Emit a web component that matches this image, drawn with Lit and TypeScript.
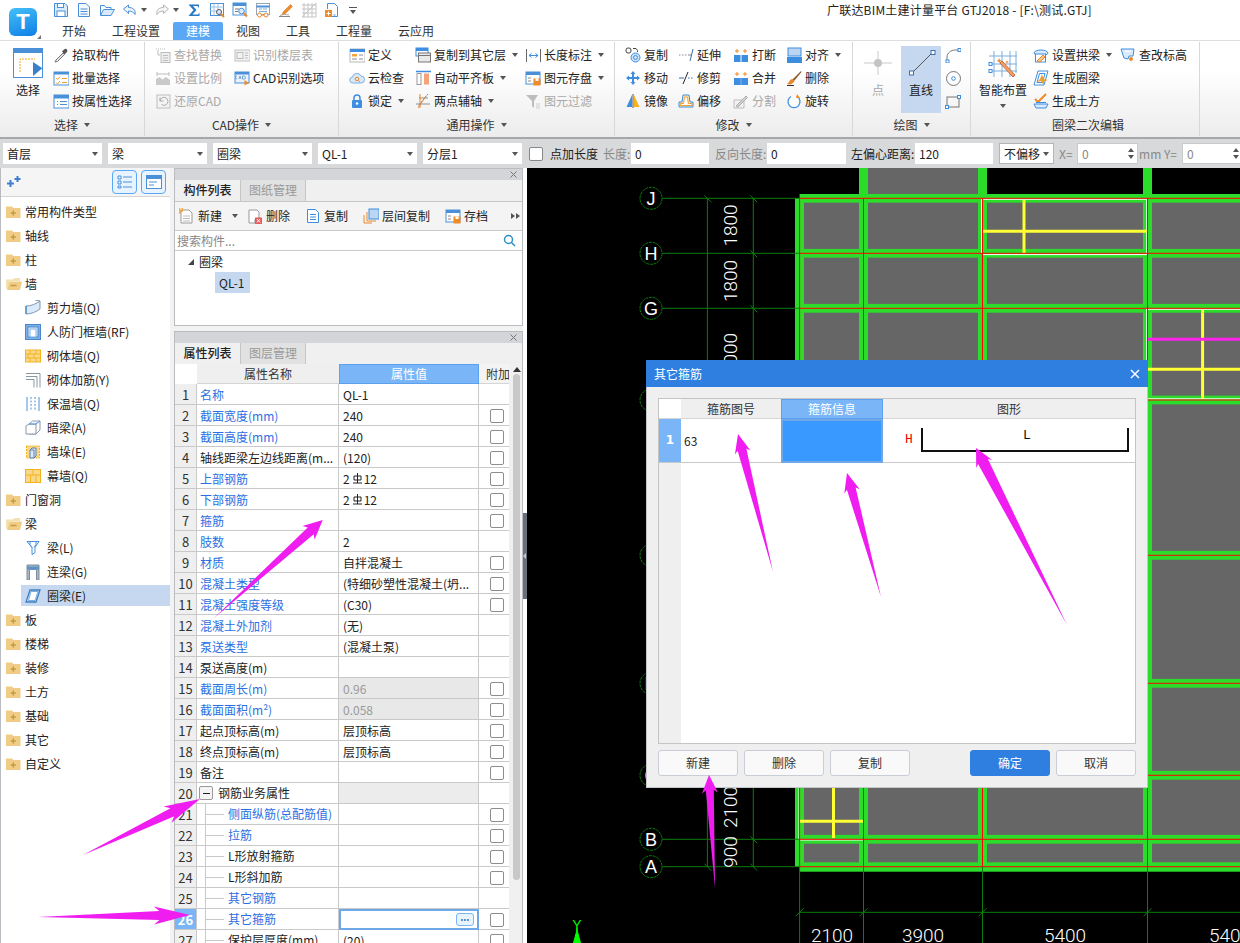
import { LitElement, html, svg, css, nothing } from 'lit';
import { customElement } from 'lit/decorators.js';

// icon set, all drawn on a 16x16 box
const ICONS: Record<string, unknown> = {
  save: svg`<path d="M1.5 1.5h10.5l2.500 2.500v10.500h-13z" fill="#dbeafa" stroke="#4a90d9"/><rect x="4.500" y="1.500" width="6" height="4" fill="#fff" stroke="#4a90d9"/><rect x="4" y="9" width="8" height="5.500" fill="#fff" stroke="#4a90d9"/>`,
  doc: svg`<path d="M2.500 1.500h7.500l3.500 3.500v9.500h-11z" fill="#f4f9fe" stroke="#4a90d9"/><path d="M4.500 7h7M4.500 9.500h7M4.500 12h7" stroke="#4a90d9"/>`,
  open: svg`<path d="M1.500 13.500v-10h4l1.500 2h5v2" fill="none" stroke="#4a90d9"/><path d="M1.500 13.500l3-6h11l-3.500 6z" fill="#dbeafa" stroke="#4a90d9"/>`,
  undo: svg`<path d="M6.500 3 1.500 7l5 4.500V9c3 0 5 1 6.500 3.500C14 8 11 5.500 6.500 5.500z" fill="#eef5fc" stroke="#4a90d9"/>`,
  redo: svg`<path d="M9.500 3l5 4-5 4.500V9c-3 0-5 1-6.500 3.500C2 8 5 5.500 9.500 5.500z" fill="#f6f6f6" stroke="#b5b5b5"/>`,
  sigma: svg`<path d="M2.500 2.500h10.500v3.500l-1.500-2H7l3.500 4-4 4.500h5.500l1.500-2v3.500H2.500l5-6z" fill="#2a79c4"/>`,
  qgrid: svg`<rect x="1.500" y="1.500" width="13" height="12" fill="#fff" stroke="#4a90d9"/><path d="M5 1.500v12M9 1.500v9M1.500 5h13M1.500 9h10" stroke="#9cc3ea"/><circle cx="10" cy="10" r="2.500" fill="#dbeafa" stroke="#555"/><path d="M12 12l3 3" stroke="#e8872c" stroke-width="2"/>`,
  qfind: svg`<rect x="1" y="1" width="13" height="12" fill="#fff" stroke="#4a90d9"/><rect x="1" y="1" width="13" height="3" fill="#4a90d9"/><path d="M3 7h4M3 9.500h3" stroke="#777"/><circle cx="9.500" cy="9" r="2.800" fill="#dbeafa" stroke="#4a90d9"/><path d="M11.500 11l3.500 3.500" stroke="#e8872c" stroke-width="2"/>`,
  qglass: svg`<rect x="1.500" y="1.500" width="13" height="11" fill="#fff" stroke="#9aa7b3"/><path d="M1.500 4.500h13" stroke="#4a90d9" stroke-width="2"/><path d="M4 7h3M8 7h4M4 9.500h8" stroke="#7aaedc"/><circle cx="4.500" cy="13" r="2" fill="#fff" stroke="#e8872c"/><circle cx="11" cy="13" r="2" fill="#fff" stroke="#e8872c"/><path d="M6.500 13h2.500" stroke="#e8872c"/>`,
  qpen: svg`<path d="M5 10 12.500 2.500l2 2L7 12l-3 1z" fill="#ef8a2d" stroke="#d8741c" stroke-width=".5"/><path d="M1 14.500h11" stroke="#888"/><path d="M2 13.500c3-1.500 6-1 9-.5" fill="none" stroke="#aaa"/>`,
  qmesh: svg`<g fill="none" stroke="#c4c4c4"><path d="M1 3h14M1 7h14M1 11h14M1 15h14M3 1v14M7 1v14M11 1v14M15 1v14"/><path d="M1 15 15 1"/></g>`,
  qnew: svg`<path d="M3.500 7V1.500h7l3 3v10H8" fill="#fff" stroke="#4a90d9"/><path d="M5.500 3.500h-.1M9.500 13h2" stroke="#4a90d9"/><rect x="1" y="8" width="7" height="7" fill="#f08a24"/><path d="M4.500 9.500v4M2.500 11.500h4" stroke="#fff"/>`,
  // ribbon, first groups
  dropper: svg`<path d="M3 13 10 6l1.500 1.500L4.500 14.500 2 15z" fill="#e4e4e4" stroke="#777"/><path d="M9 4.500 11 2.500c1-1 2.500-1 3 0s.5 2 -.500 3l-2 2z" fill="#555"/>`,
  batch: svg`<rect x="1" y="2" width="15" height="13" fill="#fff" stroke="#4a90d9"/><rect x="1" y="2" width="15" height="2.500" fill="#4a90d9"/><path d="M3 8l1.500 1.500L7 6.500M3 12.500l1.500 1.500L7 11" fill="none" stroke="#f39c2b"/><path d="M9 8.500h5M9 12.500h5" stroke="#f39c2b"/>`,
  attr: svg`<rect x="1" y="2" width="15" height="13" fill="#fff" stroke="#4a90d9"/><rect x="1" y="2" width="15" height="3.500" fill="#4a90d9"/><path d="M4 8.500h1M4 11.500h1M7 8.500h7M7 11.500h7" stroke="#4a90d9"/>`,
  findrep: svg`<g stroke="#bdbdbd" fill="none"><path d="M1 2h1M3 2h1M5 2h1M7 2h1M9 2h1" /><rect x="6" y="5.500" width="9" height="10" fill="#eee"/><path d="M8 8.500h5M8 11h5M8 13.500h5M3 3v5h2"/></g>`,
  scale: svg`<g stroke="#bdbdbd" fill="none"><path d="M2 2h.1M2 2v4M14 2v4M2 4h12"/></g><path d="M1 15V9l3.500-2 3 2.500L11 7l4 3v5z" fill="#c9c9c9"/>`,
  restore: svg`<rect x="2" y="2" width="13" height="13" fill="#f4f4f4" stroke="#bdbdbd"/><path d="M5 8a4 4 0 1 1 1.500 3.500M5 4.500V8h3.500" fill="none" stroke="#a9a9a9"/>`,
  floor: svg`<rect x="1" y="3" width="15" height="11" fill="#f2f2f2" stroke="#c2c2c2"/><rect x="3" y="5.500" width="6" height="6" fill="none" stroke="#bdbdbd"/><path d="M11 6h3M11 8.500h3M11 11h3" stroke="#bdbdbd"/>`,
  cadopt: svg`<rect x="1" y="2" width="14" height="11" fill="#eaf3fc" stroke="#4a90d9"/><rect x="1" y="2" width="14" height="2.500" fill="#4a90d9"/><path d="M3 9a1.500 1.500 0 0 1 0-3M5 9l1-3 1 3M8.500 6v3h1.500a1.500 1.500 0 0 0 0-3z" fill="none" stroke="#5a93c9" stroke-width=".8"/><path d="M10.500 10v5.500l4.500-2.500z" fill="#f08a24"/>`,
  define: svg`<rect x="1" y="2" width="15" height="13" fill="#fff" stroke="#b7b7b7"/><rect x="1" y="2" width="15" height="3" fill="#3d8ee0"/><rect x="3" y="7" width="5" height="2.500" fill="#f2a33a"/><path d="M10 8h4M3 12h5M10 12h4" stroke="#8b8b8b"/>`,
  cloud: svg`<path d="M4 13a3 3 0 0 1-.5-6 4.500 4.500 0 0 1 8.500-1 3.500 3.500 0 0 1 0 7z" fill="#d9e8f7" stroke="#7cb0e2"/><circle cx="8" cy="9" r="1.800" fill="none" stroke="#e8872c"/><path d="M9.500 10.500l1.500 1.500" stroke="#e8872c"/>`,
  lock: svg`<path d="M5 7V5a3 3 0 0 1 6 0v2" fill="none" stroke="#3d8ee0" stroke-width="1.500"/><rect x="3" y="7" width="10" height="8" rx="1" fill="#3d8ee0"/><circle cx="8" cy="10.500" r="1.300" fill="#fff"/>`,
  copyfloor: svg`<rect x="1" y="1" width="12" height="8" fill="#fff" stroke="#3d8ee0"/><rect x="1" y="1" width="12" height="3" fill="#3d8ee0"/><rect x="3.500" y="6" width="12" height="9" fill="#e9e9e9" stroke="#777"/><path d="M3.500 8.500h12" stroke="#777"/>`,
  align: svg`<path d="M1 1.500h15" stroke="#3d8ee0" stroke-width="1.500"/><rect x="2" y="3.500" width="4" height="11" fill="#fff" stroke="#999"/><rect x="9" y="3.500" width="5" height="11" fill="#f5a278"/>`,
  axis: svg`<path d="M1 11h14M4 5h9" stroke="#8f8f8f"/><path d="M5 1v14M11 3 3 15" stroke="#e8872c"/><path d="M13 1 3 13" stroke="#8f8f8f" stroke-dasharray="2 1"/>`,
  measure: svg`<path d="M1.500 2v13M15.500 2v13" stroke="#666"/><path d="M4 8.500h9M4 8.500l2.500-2M4 8.500l2.500 2M13 8.500l-2.500-2M13 8.500l-2.500 2" fill="none" stroke="#3d8ee0"/>`,
  store: svg`<rect x="1" y="2" width="14" height="12" fill="#fff" stroke="#4a90d9"/><rect x="1" y="2" width="14" height="3" fill="#4a90d9"/><path d="M3 8h3M3 11h3" stroke="#888"/><rect x="8.500" y="8.500" width="7" height="7" fill="#f08a24"/><rect x="10.500" y="8.500" width="3" height="2.500" fill="#fff"/>`,
  filter: svg`<path d="M1 2h12L9 8v7l-2-2V8z" fill="#bdbdbd"/><path d="M11 11h4M11 13h4M11 15h4" stroke="#cfcfcf"/>`,
  // modify group
  copy: svg`<rect x="1" y="1" width="5" height="5" rx="2" fill="none" stroke="#444"/><circle cx="10.500" cy="10.500" r="4.500" fill="#cfe3f7" stroke="#3d8ee0"/><circle cx="10.500" cy="10.500" r="2" fill="none" stroke="#3d8ee0"/><path d="M8 1.500h3l1.500 2M12.500 3.500v1.500" fill="none" stroke="#444"/>`,
  move: svg`<path d="M8 1l2.500 3h-1.500v3h3v-1.500L15 8l-3 2.500V9h-3v3h1.500L8 15l-2.500-3H7V9H4v1.500L1 8l3-2.500V7h3V4H5.500z" fill="#3d8ee0"/>`,
  mirror: svg`<path d="M7 2v12H1.500z" fill="#3d8ee0"/><path d="M8 1v14" stroke="#555"/><path d="M9 2v12h5.500z" fill="#f5b21d"/>`,
  extend: svg`<path d="M1 8h1.500M4 8h1.500M7 8h1.500" stroke="#7b8da0"/><path d="M10 8h4" stroke="#7b8da0"/><path d="M15 2l-3 12" stroke="#3f6ea8"/>`,
  trim: svg`<path d="M1 8h5M10 8h1.500M13 8h1.500" stroke="#3f6ea8"/><path d="M10 2 5 14" stroke="#223"/>`,
  offset: svg`<path d="M5 2h6l1 7h3v5H1V9h3z" fill="#ffe9c2" stroke="#3d8ee0"/><path d="M6.500 4h3l.8 6.500H14v2H2.500v-2h3z" fill="#fff" stroke="#f0a030"/>`,
  breakit: svg`<rect x="1" y="8" width="6.500" height="7" fill="#3d8ee0"/><rect x="8.500" y="8" width="6.500" height="7" fill="#3d8ee0"/><path d="M4 6V2M2 4h4M12 6V2M10 4h4" stroke="#f08a24"/>`,
  merge: svg`<rect x="1" y="8" width="14" height="7" fill="#3d8ee0"/><path d="M8 8v7" stroke="#7db5ea"/><path d="M4 6V2M2 4h4M12 6V2M10 4h4" stroke="#f08a24"/>`,
  split: svg`<path d="M1 15V7h10v8z" fill="#f2f2f2" stroke="#bdbdbd"/><path d="M3 13 13 3l1.500 1.500L5 14z" fill="#d0d0d0" stroke="#b0b0b0"/>`,
  alignto: svg`<rect x="2" y="1" width="13" height="8" fill="#bcd6f2" stroke="#3d8ee0"/><rect x="1" y="10" width="15" height="6" fill="#3d8ee0"/>`,
  del: svg`<path d="M15 1 6.500 9.500l1.500 1.500L15.500 2z" fill="#8b5a2b"/><path d="M7 9c-2 0-3.500 1-4 3L1 14c3 1 6 0 7.500-3z" fill="#e8872c"/><path d="M1 15.500h7" stroke="#333"/>`,
  rotate: svg`<path d="M5 3.500a6 6 0 1 0 6 0" fill="#fff" stroke="#3d8ee0" stroke-width="1.300"/><path d="M11 1l-1 4 4 0z" fill="#f08a24"/>`,
  arch: svg`<path d="M1 6c1-4 13-4 14 0l-1 1.500H2z" fill="#dbeafa" stroke="#3d8ee0"/><rect x="2.500" y="7" width="10" height="8" fill="#fff" stroke="#3d8ee0"/><path d="M4 14 10 8l2 2-5 5z" fill="#f7c68a" stroke="#e8872c"/>`,
  ring: svg`<path d="M5 1h10l-4 14H1z" fill="#fff" stroke="#3d8ee0"/><path d="M6.500 3.500h5.500l-2.500 9H4z" fill="#fff" stroke="#3d8ee0"/><path d="M9 4l1.500 5L15 10l-3.500 1-1 4L8 11l-4 1 3-3z" fill="#f0a030"/>`,
  earth: svg`<path d="M2 6l3 3 8-8" fill="none" stroke="#f08a24" stroke-width="2"/><path d="M1 11h14l-2 4H3z" fill="#dbeafa" stroke="#3d8ee0"/><path d="M3 9.500h10" stroke="#3d8ee0"/>`,
  elev: svg`<path d="M1 2h13l-1 7H9l-1 3-4-1z" fill="#dbeafa" stroke="#3d8ee0"/><path d="M5 4h6" stroke="#fff"/><circle cx="11" cy="12" r="2" fill="#f08a24"/>`,
  arc: svg`<path d="M2 14.500V10c0-4 4-7 8-7h3" fill="none" stroke="#777"/><rect x="1" y="13" width="3" height="3" fill="#fff" stroke="#3d8ee0"/><rect x="13" y="1.500" width="3" height="3" fill="#fff" stroke="#3d8ee0"/>`,
  circle: svg`<circle cx="8.500" cy="8.500" r="7" fill="none" stroke="#777"/><circle cx="8.500" cy="8.500" r="1.800" fill="#fff" stroke="#3d8ee0"/>`,
  rect: svg`<rect x="2" y="4" width="12" height="10" fill="none" stroke="#777"/><rect x=".5" y="12.500" width="3" height="3" fill="#fff" stroke="#3d8ee0"/><rect x="12.500" y="2.500" width="3" height="3" fill="#fff" stroke="#3d8ee0"/>`,
  // sidebar
  folder: svg`<path d="M0 4V2.500h6L7.500 4H14.500v10H0z" fill="#f0cd87"/><path d="M7.300 6.500v5M4.800 9h5" stroke="#c99a3d" stroke-width="1.500"/>`,
  folderOpen: svg`<path d="M0 3.500h7L8.500 2H14v3H4L1.500 13 0 12z" fill="#f4e0b0"/><path d="M3.500 5.500H16L14 14H1z" fill="#f0cd87"/><path d="M4.500 9.500h6" stroke="#c99a3d" stroke-width="1.500"/>`,
  shear: svg`<path d="M1 6c5 0 10-2 14-5v8c-4 3-9 5-14 5z" fill="#dbeafa" stroke="#7e97b4"/><path d="M1 6v8" stroke="#5a93c9" stroke-width="1.500"/><path d="M15 1 10 0" stroke="#7e97b4"/>`,
  frame: svg`<rect x=".5" y=".5" width="15" height="15" fill="#7ab0e8" stroke="#4a86c8"/><rect x="3" y="3" width="10" height="10" fill="#eaf3fc" stroke="#4a86c8"/><rect x="5" y="5" width="6" height="8" fill="#fff" stroke="#7ab0e8"/>`,
  brick: svg`<rect x=".5" y="2" width="15" height="12" fill="#f8d98c" stroke="#f5b21d"/><path d="M.5 6h15M.5 10h15M5 2v4M11 2v4M3 6v4M9 6v4M5 10v4M11 10v4" stroke="#f5b21d"/>`,
  rebar: svg`<path d="M1 1.500h14v14M1 4.500h11v11M1 7.500h8v8" fill="none" stroke="#8a97a3"/>`,
  insul: svg`<path d="M2 1v14M14 1v14" stroke="#4a90d9"/><path d="M6 1v14M10 1v14" stroke="#4a90d9" stroke-dasharray="2 1.500"/>`,
  hidden: svg`<path d="M4 4 7.500 1H15v9l-4 4H4z" fill="#fff" stroke="#8a97a3"/><path d="M1 6l3-2h7v10H1z" fill="#fff" stroke="#8a97a3"/><path d="M4 4h7l4-3" fill="#dbeafa" stroke="#4a90d9"/>`,
  pier: svg`<rect x="1.500" y="2" width="13" height="12" fill="#f8d98c" stroke="#f5b21d" stroke-dasharray="2 1"/><path d="M5 6l2-2h4v8l-2 2H5z" fill="#dbeafa" stroke="#5a7fa8"/><path d="M9 6v8M5 6h4" stroke="#5a7fa8"/>`,
  curtain: svg`<rect x=".5" y="1.500" width="15" height="13" fill="#f8d98c" stroke="#f5b21d"/><path d="M.5 7h15M8 1.500V7M5.500 7v7.500M11 7v7.500" stroke="#f5b21d"/>`,
  beam: svg`<path d="M2 1.500h12l-4 6v5l-3 2v-7z" fill="#fff" stroke="#4a90d9"/><path d="M5 1.500v3l2 3M11 1.500v3l-2 3M2 1.500h12" fill="none" stroke="#4a90d9"/>`,
  link: svg`<path d="M2 1h12v15h-2.500V5.500h-7V16H2z" fill="#a9b6c4" stroke="#7e8d9c"/><rect x="2" y="2.500" width="12" height="3" fill="#5a93c9"/>`,
  ringbeam: svg`<path d="M5 2h10l-4 12H1z" fill="#cfe3f7" stroke="#3d7fc4" stroke-width="1.300"/><path d="M6 3.500h7L10 12.500H3.500z" fill="#fff" stroke="#3d7fc4" stroke-width=".6"/>`,
  // list panel toolbar
  tnew: svg`<path d="M3 2h8l3 3v10H3z" fill="#fff" stroke="#999"/><path d="M5 8h7M5 10.500h7M5 13h7" stroke="#bbb"/><path d="M1 1h1.500M3.500 1H5M1 3h4M1 5h1.500" stroke="#f39c2b" stroke-width="1.500"/>`,
  tdel: svg`<path d="M2 2h8l2 2v7H8v4H2z" fill="#fff" stroke="#999"/><rect x="8" y="9.500" width="7" height="6.500" fill="#e25c5c"/><path d="M9.800 11l3.400 3.500M13.200 11l-3.400 3.500" stroke="#fff"/>`,
  tcopy: svg`<path d="M2.500 1.500h8l3 3v10h-11z" fill="#fff" stroke="#3d8ee0"/><path d="M5 6.500h6M5 9h6M5 11.500h6" stroke="#3d8ee0"/>`,
  tlayer: svg`<rect x="6" y="1" width="10" height="10" fill="#bcd6f2" stroke="#3d8ee0"/><path d="M4 4v9h9M1 7v8h8" fill="none" stroke="#e8872c"/>`,
  tsave: svg`<rect x="1" y="2" width="14" height="12" fill="#fff" stroke="#4a90d9"/><rect x="1" y="2" width="14" height="3" fill="#4a90d9"/><path d="M3 8h3M3 11h3" stroke="#888"/><rect x="8.500" y="8.500" width="7" height="7" fill="#f08a24"/><rect x="10.500" y="8.500" width="3" height="2.500" fill="#fff"/>`,
};

const ico = (name: string, size = 16) =>
  html`<svg class="ic" width=${size} height=${size} viewBox="0 0 16 16">${ICONS[name]}</svg>`;

interface RibItem { icon: string; text?: string; off?: boolean; caret?: boolean }
interface RibCol { w: number; ml?: number; bw?: number; items?: RibItem[]; big?: string; bigText?: string; off?: boolean; active?: boolean; caret?: boolean }
interface RibGroup { w: number; pad: number; label: string; labelShift?: number; caret: boolean; cols: RibCol[] }

const bigSelect = svg`<rect x=".5" y=".5" width="29" height="29" fill="#fff" stroke="#4a90d9"/><rect x="1" y="1" width="28" height="4" fill="#4a90d9"/><path d="M7 24V11h15" fill="none" stroke="#f5a623" stroke-dasharray="2 1"/><path d="M20 14v14l9-7.500V20z" fill="#3a7fc9"/>`;
const bigLine = svg`<path d="M6 25 26 5" stroke="#555"/><rect x="3.500" y="23" width="4" height="4" fill="#fff" stroke="#3d6fb0"/><rect x="25" y="2.500" width="4" height="4" fill="#fff" stroke="#3d6fb0"/>`;
const bigPoint = svg`<path d="M15 3v24M1 15h28" stroke="#c9c9c9"/><circle cx="15" cy="15" r="4" fill="#c4c4c4"/>`;
const bigSmart = svg`<g stroke="#7aaedc"><path d="M6 3v26M14 3v26M22 3v26M28 3v22M1 8h28M1 16h28M1 23h28"/></g><rect x="1" y="14.500" width="3" height="3" fill="#fff" stroke="#3d8ee0"/><rect x="1" y="21.500" width="3" height="3" fill="#fff" stroke="#3d8ee0"/><path d="M14 13 27 27l-2 2L12 15z" fill="#f0a070" stroke="#c96b2c"/><path d="M11 10l1 2 2 .500-2 1-.500 2-1-2-2-.500 2-1zM19 12l.500 1.500 1.500.500-1.500.500-.500 1.500-.500-1.500-1.500-.500 1.500-.500z" fill="#e8872c"/>`;

const BIG: Record<string, unknown> = { select: bigSelect, line: bigLine, point: bigPoint, smart: bigSmart };

const GROUPS: RibGroup[] = [
  { w: 145, pad: 13, label: '选择', caret: true, cols: [
    { w: 40, bw: 30, big: 'select', bigText: '选择' },
    { w: 90, items: [{ icon: 'dropper', text: '拾取构件' }, { icon: 'batch', text: '批量选择' }, { icon: 'attr', text: '按属性选择' }] },
  ] },
  { w: 194, pad: 10, label: 'CAD操作', caret: true, cols: [
    { w: 79, items: [{ icon: 'findrep', text: '查找替换', off: true }, { icon: 'scale', text: '设置比例', off: true }, { icon: 'restore', text: '还原CAD', off: true }] },
    { w: 100, items: [{ icon: 'floor', text: '识别楼层表', off: true }, { icon: 'cadopt', text: 'CAD识别选项' }] },
  ] },
  { w: 276, pad: 10, label: '通用操作', caret: true, cols: [
    { w: 66, items: [{ icon: 'define', text: '定义' }, { icon: 'cloud', text: '云检查' }, { icon: 'lock', text: '锁定', caret: true }] },
    { w: 110, items: [{ icon: 'copyfloor', text: '复制到其它层', caret: true }, { icon: 'align', text: '自动平齐板', caret: true }, { icon: 'axis', text: '两点辅轴', caret: true }] },
    { w: 88, items: [{ icon: 'measure', text: '长度标注', caret: true }, { icon: 'store', text: '图元存盘', caret: true }, { icon: 'filter', text: '图元过滤', off: true }] },
  ] },
  { w: 238, pad: 10, label: '修改', caret: true, cols: [
    { w: 53, items: [{ icon: 'copy', text: '复制' }, { icon: 'move', text: '移动' }, { icon: 'mirror', text: '镜像' }] },
    { w: 55, items: [{ icon: 'extend', text: '延伸' }, { icon: 'trim', text: '修剪' }, { icon: 'offset', text: '偏移' }] },
    { w: 53, items: [{ icon: 'breakit', text: '打断' }, { icon: 'merge', text: '合并' }, { icon: 'split', text: '分割', off: true }] },
    { w: 62, items: [{ icon: 'alignto', text: '对齐', caret: true }, { icon: 'del', text: '删除' }, { icon: 'rotate', text: '旋转' }] },
  ] },
  { w: 118, pad: 10, label: '绘图', caret: true, cols: [
    { w: 38, bw: 30, big: 'point', bigText: '点', off: true },
    { w: 40, big: 'line', bigText: '直线', active: true },
    { w: 22, ml: 4, items: [{ icon: 'arc' }, { icon: 'circle' }, { icon: 'rect' }] },
  ] },
  { w: 229, pad: 8, label: '圈梁二次编辑', labelShift: 6, caret: false, cols: [
    { w: 54, bw: 48, big: 'smart', bigText: '智能布置', caret: true },
    { w: 87, items: [{ icon: 'arch', text: '设置拱梁', caret: true }, { icon: 'ring', text: '生成圈梁' }, { icon: 'earth', text: '生成土方' }] },
    { w: 72, items: [{ icon: 'elev', text: '查改标高' }] },
  ] },
];

const QAT: [string, boolean][] = [
  ['save', false], ['doc', false], ['open', false], ['undo', true], ['redo', true], ['sigma', false],
  ['qgrid', false], ['qfind', false], ['qglass', false], ['qpen', false], ['qmesh', false], ['qnew', false],
];

const TREE: [string, string, number?][] = [
  ['folder', '常用构件类型'], ['folder', '轴线'], ['folder', '柱'], ['folderOpen', '墙'],
  ['shear', '剪力墙(Q)', 1], ['frame', '人防门框墙(RF)', 1], ['brick', '砌体墙(Q)', 1], ['rebar', '砌体加筋(Y)', 1],
  ['insul', '保温墙(Q)', 1], ['hidden', '暗梁(A)', 1], ['pier', '墙垛(E)', 1], ['curtain', '幕墙(Q)', 1],
  ['folder', '门窗洞'], ['folderOpen', '梁'], ['beam', '梁(L)', 1], ['link', '连梁(G)', 1], ['ringbeam', '圈梁(E)', 2],
  ['folder', '板'], ['folder', '楼梯'], ['folder', '装修'], ['folder', '土方'], ['folder', '基础'], ['folder', '其它'], ['folder', '自定义'],
];

// name, is blue, value, has checkbox
const PROPS: [string, boolean, string, boolean][] = [
  ['名称', true, 'QL-1', false],
  ['截面宽度(mm)', true, '240', true],
  ['截面高度(mm)', true, '240', true],
  ['轴线距梁左边线距离(m...', false, '(120)', true],
  ['上部钢筋', true, '2#12', true],
  ['下部钢筋', true, '2#12', true],
  ['箍筋', true, '', true],
  ['肢数', true, '2', false],
  ['材质', true, '自拌混凝土', true],
  ['混凝土类型', true, '(特细砂塑性混凝土(坍...', true],
  ['混凝土强度等级', true, '(C30)', true],
  ['混凝土外加剂', true, '(无)', false],
  ['泵送类型', true, '(混凝土泵)', false],
  ['泵送高度(m)', false, '', false],
  ['截面周长(m)', true, '0.96', true],
  ['截面面积(m²)', true, '0.058', true],
  ['起点顶标高(m)', false, '层顶标高', true],
  ['终点顶标高(m)', false, '层顶标高', true],
  ['备注', false, '', true],
  ['钢筋业务属性', false, '', false],
  ['侧面纵筋(总配筋值)', true, '', true],
  ['拉筋', true, '', true],
  ['L形放射箍筋', false, '', true],
  ['L形斜加筋', false, '', true],
  ['其它钢筋', true, '', false],
  ['其它箍筋', true, '', true],
  ['保护层厚度(mm)', false, '(20)', true],
];

const rebarGlyph = html`<svg class="rebar" width="11" height="12" viewBox="0 0 11 12"><path d="M2 3h7v4H2zM5.500 0v10M1 10h9" fill="none" stroke="#222"/></svg>`;

// CAD drawing in page coordinates
const GX = [799.6, 863.5, 982.5, 1147.5];
const GY = [198.3, 253.3, 308.3, 400, 555.3, 683.3, 775.3, 839.3, 866.7];
const GL = ['J', 'H', 'G', 'F', 'E', 'D', 'C', 'B', 'A'];
const CELLX = [[804, 859], [868, 978], [987, 1143], [1152, 1240]];
const AXIS = '#0a7d0a';

function drawing() {
  const cells = GY.slice(0, -1).flatMap((y, i) =>
    CELLX.map(([a, b]) => svg`<rect x=${a} y=${y + 4.4} width=${b - a} height=${GY[i + 1] - y - 8.800} fill="#666"/>`));
  const hlines = GY.map((y) => svg`<path d="M662 ${y}H799.600" stroke=${AXIS}/>`);
  const dimTicks = [
    ...GY.map((y) => [753.3, y]),
    [707.4, 198.3], [707.4, 866.7],
  ].map(([x, y]) => svg`<path d="M${x - 3} ${y - 3}l7 7" stroke=${AXIS}/>`);
  const bottomTicks = GX.map((x) => svg`<path d="M${x} 866.700V943M${x - 4} 916.300l8-8" stroke=${AXIS}/>`);
  return svg`
    <rect x="795" y="198" width="6" height="669" fill="#2bdc2b"/>
    <rect x="799.600" y="194" width="441" height="677.700" fill="#2bdc2b"/>
    <rect x="859" y="168" width="9" height="26" fill="#2bdc2b"/>
    <rect x="868" y="168" width="110" height="26" fill="#666"/>
    <rect x="978" y="168" width="9" height="26" fill="#2bdc2b"/>
    <rect x="1143" y="168" width="9" height="26" fill="#2bdc2b"/>
    ${cells}
    <g fill="none" stroke="#fff">
      <path d="M981.500 253V199.300H1146.700V253M982 254.600H1147"/>
      <path d="M1146.700 308V400M1147 309.300H1240M1147 398.800H1240"/>
      <path d="M799 788V840H863"/>
    </g>
    <g stroke="#ffff33" stroke-width="3">
      <path d="M982 231.300H1147M1024 200V253"/>
      <path d="M1202.600 310V399M1148 369.300H1240"/>
      <path d="M833.500 788V838M800 821.300H863"/>
    </g>
    <path d="M1148 339.300H1240" stroke="#ff22ee" stroke-width="3"/>
    <g stroke="#f00">
      ${GY.map((y) => svg`<path d="M799.600 ${y}H1240"/>`)}
      ${GX.map((x) => svg`<path d="M${x} 198.300V866.700"/>`)}
    </g>
    ${hlines}
    <path d="M707.400 198.300V866.700M753.300 198.300V866.700M799.600 912.300H1240" stroke=${AXIS}/>
    ${dimTicks}${bottomTicks}
    ${GY.map((y, i) => svg`<circle cx="651" cy=${y} r="11" fill="none" stroke=${AXIS} stroke-dasharray="3 .8"/>
      <text class="axis" x="651" y=${y + 6.500}>${GL[i]}</text>`)}
    ${[['1800', 225.5], ['1800', 281], ['3000', 354], ['2100', 807], ['900', 852]].map(([t, y]) =>
      svg`<text class="dimtext" transform="translate(737 ${y}) rotate(-90)">${t}</text>`)}
    ${[['2100', 832], ['3900', 923], ['5400', 1065], ['5400', 1230]].map(([t, x]) =>
      svg`<text class="dimtext" x=${x} y="942">${t}</text>`)}
    <text class="yaxis" x="577" y="930">Y</text>
    <path d="M577 928V931M577 930l-3.500 13h7z" fill="#0f0" stroke="#0f0"/>
  `;
}

// annotation arrows drawn over the screenshot
const ARROWS: number[][] = [
  [773, 572, 738, 434, 19, 8, 4.5],
  [881, 597, 847, 473, 19, 8, 4.5],
  [1067, 625, 976, 448, 18, 9, 5.5],
  [715, 888, 709, 775, 18, 8, 4],
  [214, 618, 322.7, 520, 19, 9, 4.5],
  [83, 855, 200, 799, 36, 9, 4.5],
  [38, 917, 190, 915, 36, 9, 4.5],
];

function arrowPoints([tx, ty, px, py, len, wing, neck]: number[]) {
  const l = Math.hypot(px - tx, py - ty);
  const dx = (px - tx) / l, dy = (py - ty) / l;
  const nx = -dy, ny = dx;
  const bx = px - dx * len, by = py - dy * len;
  const cx = px - dx * len * 0.85, cy = py - dy * len * 0.85;
  return [
    [tx, ty], [cx + nx * neck, cy + ny * neck], [bx + nx * wing, by + ny * wing], [px, py],
    [bx - nx * wing, by - ny * wing], [cx - nx * neck, cy - ny * neck],
  ].map((p) => p.join(',')).join(' ');
}

const FIELDS = [
  { ml: 5, lw: 28, label: '长度:', iw: 78, value: '0', dim: true },
  { ml: 6, lw: 52, label: '反向长度:', iw: 79, value: '0', dim: true },
  { ml: 5, lw: 64, label: '左偏心距离:', iw: 78, value: '120', dim: false },
];

const closeX = html`<svg width="7" height="7" viewBox="0 0 7 7"><path d="M.5.5l6 6M6.500.5l-6 6" stroke="#777"/></svg>`;

@customElement('app-root')
export class AppRoot extends LitElement {
  static override styles = css`
    :host {
      display: block;
      position: relative;
      width: 1240px;
      height: 943px;
      overflow: hidden;
      background: #fff;
      color: #222;
      font: 12px/16px "Noto Sans CJK SC", "Liberation Sans", sans-serif;
    }
    .ic { flex: none; display: block; }
    .caret {
      display: inline-block;
      flex: none;
      width: 0;
      height: 0;
      border: 3px solid transparent;
      border-top: 4px solid #555;
      border-bottom: 0;
    }

    /* title + tabs */
    .top { display: flex; height: 40px; border-bottom: 1px solid #dedede; box-sizing: content-box; }
    .logo { position: relative; width: 46px; margin-right: 3px; flex: none; }
    .logo-box {
      margin: 8px 0 0 9px;
      width: 28px;
      height: 28px;
      border-radius: 6px;
      background: linear-gradient(160deg, #45c0f7, #0f7fe6);
      color: #fff;
      font: bold 22px/28px "Liberation Sans", sans-serif;
      text-align: center;
    }
    .logo-mark {
      position: absolute;
      right: 5px;
      bottom: 1px;
      width: 0;
      height: 0;
      border-style: solid;
      border-width: 0 0 4px 4px;
      border-color: transparent transparent #777 transparent;
    }
    .top-right { flex: 1; }
    .qat-row { display: flex; height: 20px; padding-bottom: 2px; align-items: center; }
    .qat { display: flex; align-items: center; width: 778px; padding-left: 4px; box-sizing: border-box; }
    .qat-slot { width: 23px; display: flex; }
    .qat-slot.wide { width: 32px; align-items: center; gap: 3px; }
    .qat-more { margin-left: 2px; width: 8px; border-top: 1px solid #555; display: flex; justify-content: center; padding-top: 2px; }
    .title { white-space: nowrap; color: #222; letter-spacing: .2px; }
    .tabs { display: flex; height: 18px; }
    .tab { padding: 0 13px; line-height: 18px; color: #333; }
    .tab.on { background: #5aa8f5; color: #fff; border-radius: 2px 2px 0 0; }

    /* ribbon */
    .ribbon {
      display: flex;
      height: 96px;
      background: linear-gradient(#fff 30%, #ececec);
      border-bottom: 2px solid #a5a7aa;
    }
    .group { flex: none; display: flex; flex-direction: column; box-sizing: border-box; border-right: 1px solid #d8d8d8; margin: 1px 0 1px; }
    .cols { display: flex; height: 72px; padding-top: 1px; }
    .col { flex: none; }
    .ri { display: flex; align-items: center; height: 23px; white-space: nowrap; }
    .ri .slot { width: 19px; flex: none; }
    .ri .caret { margin-left: 6px; }
    .ri.off, .big.off, .off { color: #a8a8a8; }
    .big { display: flex; flex-direction: column; align-items: center; margin-top: 3px; height: 67px; }
    .big.active { background: #c6d8ef; }
    .bi { height: 32px; padding-top: 2px; }
    .bt { white-space: nowrap; line-height: 20px; }
    .big .caret { margin-top: 4px; }
    .glabel { display: flex; justify-content: center; align-items: center; gap: 6px; height: 22px; color: #333; }

    /* field bar */
    .fields {
      display: flex;
      align-items: center;
      height: 29px;
      padding-left: 3px;
      background: #d8d9db;
      white-space: nowrap;
    }
    .sel, .input, .spin {
      flex: none;
      height: 21px;
      box-sizing: border-box;
      background: #fff;
      display: flex;
      align-items: center;
      padding-left: 4px;
      line-height: 21px;
    }
    .sel { width: 99px; margin-right: 6px; justify-content: space-between; padding-right: 4px; color: #222; }
    .sel.last { margin-right: 0; }
    .sel.short { width: 55px; border: 1px solid #b5b5b5; margin-left: 6px; margin-right: 0; }
    .check { width: 12px; height: 12px; border: 1px solid #888; border-radius: 2px; background: #fff; flex: none; }
    .fields .check { margin: 0 7px; }
    .lb { flex: none; color: #222; }
    .lb.dim, .spin { color: #888; }
    .spin { width: 61px; justify-content: space-between; padding-right: 3px; border: 1px solid #c9c9c9; }
    .updown { display: flex; flex-direction: column; gap: 3px; }
    .up { width: 0; height: 0; border: 3px solid transparent; border-bottom: 4px solid #555; border-top: 0; }
    .down { width: 0; height: 0; border: 3px solid transparent; border-top: 4px solid #555; border-bottom: 0; }

    /* main area */
    .main { display: flex; height: 775px; background: #f2f2f2; }
    .side { width: 170px; flex: none; background: #fff; border-left: 1px solid #b9bcc0; box-sizing: border-box; }
    .side-bar {
      display: flex;
      align-items: center;
      height: 28px;
      padding-left: 6px;
      border-bottom: 1px solid #d5d5d5;
      background: #f5f5f5;
    }
    .side-btn {
      width: 25px;
      height: 24px;
      box-sizing: border-box;
      border: 1px solid #5aa8f5;
      border-radius: 4px;
      background: #e7f3ff;
      display: flex;
      align-items: center;
      justify-content: center;
      margin-left: 4px;
    }
    .side-btn.first { margin-left: 91px; }
    .tree { padding-top: 3px; }
    .node { display: flex; align-items: center; height: 24px; padding-left: 5px; gap: 3px; white-space: nowrap; }
    .node.child { padding-left: 24px; gap: 6px; }
    .node.sel-node { background: linear-gradient(#fff 1px, #c6d8ef 1px, #c6d8ef 22px, #fff 22px); margin-left: 20px; padding-left: 4px; }

    .mid { width: 349px; flex: none; margin-left: 4px; display: flex; flex-direction: column; }
    .panel { border: 1px solid #b9bcc0; background: #fff; box-sizing: border-box; }
    .panel.list { height: 158px; }
    .panel.props { flex: 1; margin-top: 5px; position: relative; overflow: hidden; border-bottom: 0; display: flex; flex-direction: column; }
    .phead { height: 11px; background: #d3d5d8; display: flex; justify-content: flex-end; align-items: center; padding-right: 5px; }
    .ptabs { display: flex; height: 21px; background: #f0f0f0; border-bottom: 1px solid #c6c6c6; }
    .ptab { width: 65px; text-align: center; line-height: 20px; color: #222; font-weight: 500; }
    .ptab.off { width: 64px; background: #e1e1e1; color: #999; font-weight: 400; border: 0 solid #c6c6c6; border-width: 0 1px; }
    .ptool { display: flex; align-items: center; height: 28px; background: #f4f4f4; border-bottom: 1px solid #c9c9c9; padding-left: 3px; }
    .tb { display: flex; align-items: center; gap: 3px; margin-right: 15px; white-space: nowrap; }
    .tb.with-caret { margin-right: 9px; gap: 4px; }
    .tb .caret { margin-left: 6px; }
    .more { margin-left: auto; margin-right: 2px; display: flex; gap: 1px; }
    .tri-r { width: 0; height: 0; border: 3px solid transparent; border-left: 4px solid #555; border-right: 0; }
    .search { display: flex; align-items: center; justify-content: space-between; height: 19px; padding: 0 6px 0 2px; border-bottom: 1px solid #c9c9c9; color: #888; }
    .ltree { padding: 1px 0 0 13px; }
    .ltree-row { display: flex; align-items: center; gap: 5px; height: 20px; }
    .tri { width: 0; height: 0; border-style: solid; border-width: 0 0 6px 6px; border-color: transparent transparent #444 transparent; }
    .qlrow { margin: 0 0 0 27px; width: 35px; height: 21px; background: #c6d8ef; padding-left: 4px; box-sizing: border-box; line-height: 21px; }

    .grid-wrap { display: flex; flex: 1; min-height: 0; margin-top: -1px; }
    .grid { width: 334px; flex: none; }
    .row { display: grid; grid-template-columns: 22px 142px 140px 30px; height: 21px; }
    .row > div { box-sizing: border-box; border-bottom: 1px solid #c9c9c9; border-right: 1px solid #c9c9c9; line-height: 22px; white-space: nowrap; overflow: hidden; }
    .row.head { height: 20px; }
    .row.head > div { background: #efefef; text-align: center; border: 0; border-bottom: 1px solid #d5d5d5; color: #333; line-height: 20px; }
    .row.head .corner { background: #fff; border: 0; }
    .row.head .hot { background: #7ab5f7; color: #fff; border: 1px solid #5da0ee; line-height: 18px; }
    .row.head .attach { text-align: left; padding-left: 7px; background: #f4f4f4; }
    .num { background: #efefef; text-align: center; color: #333; font-size: 13px; }
    .num.hot { background: #7ab5f7; color: #fff; font-weight: 700; }
    .name { padding-left: 3px; }
    .name.blue { color: #2b6fe2; }
    .val { padding: 1px 0 0 4px; display: flex; align-items: center; }
    .val.gray { background: #e8e8e8; color: #999; }
    .val.sect { background: #ececec; }
    .val.edit { padding: 0 3px 0 0; border: 2px solid #6fa8e8 !important; justify-content: flex-end; }
    .dots { width: 16px; height: 11px; border: 1px solid #7ab5f7; border-radius: 3px; background: #e7f3ff; display: flex; align-items: center; justify-content: center; gap: 1px; }
    .dots i { width: 2px; height: 2px; background: #5a93c9; display: block; }
    .rebar { margin: 0 1px 0 2px; }
    .chk { display: flex; align-items: center; padding: 1px 0 0 11px; border-right: 0 !important; }
    .chk .check { width: 12px; height: 12px; border-color: #8d8d8d; }
    .branch { display: flex; align-items: center; padding-left: 0; }
    .stem { width: 8px; height: 21px; border-right: 1px solid #c9c9c9; flex: none; }
    .twig { width: 18px; border-top: 1px solid #c9c9c9; margin-right: 4px; flex: none; }
    .box {
      width: 12px;
      height: 12px;
      border: 1px solid #9a9a9a;
      border-radius: 2px;
      background: #f4f4f4;
      margin: 0 5px 0 2px;
      display: flex;
      align-items: center;
      justify-content: center;
      flex: none;
    }
    .box i { display: block; width: 7px; height: 1px; background: #222; }
    .sbar { width: 14px; flex: none; background: #f0f0f0; display: flex; flex-direction: column; align-items: center; padding-top: 3px; gap: 2px; }
    .sbar .up { margin-left: 1px; border-width: 0 4px 5px; border-style: solid; border-color: transparent transparent #333; }
    .thumb { width: 7px; height: 506px; background: #c8c8c8; border-radius: 4px; margin-left: 1px; }

    .grip { width: 4px; flex: none; display: flex; align-items: center; background: #fff; }
    .grip div { width: 4px; height: 86px; background: #6a7078; display: flex; align-items: center; }
    .grip i { width: 0; height: 0; border: 3px solid transparent; border-right: 3px solid #c5c8cc; border-left: 0; }
    .canvas { flex: 1; background: #000; overflow: hidden; }
    .canvas svg { display: block; }
    .axis { fill: #fff; font: 18px "Liberation Sans", sans-serif; text-anchor: middle; }
    .dimtext { fill: #fff; font: 300 19px Roboto, "Liberation Sans", sans-serif; text-anchor: middle; }
    .yaxis { fill: #0f0; font: 14px "Liberation Sans", sans-serif; text-anchor: middle; }

    /* dialog */
    .dialog {
      position: absolute;
      left: 646px;
      top: 360px;
      width: 502px;
      height: 428px;
      box-sizing: border-box;
      background: #efefef;
      border: 1px solid #c3c6cb;
      border-top: 0;
      display: flex;
      flex-direction: column;
    }
    .dhead {
      display: flex;
      align-items: center;
      justify-content: space-between;
      height: 27px;
      margin: 0 -1px;
      padding: 0 8px;
      background: #2e7fe0;
      color: #fff;
      flex: none;
    }
    .dtable {
      flex: 1;
      margin: 11px 11px 6px;
      border: 1px solid #c4c4c4;
      background: #fff;
      display: flex;
      flex-direction: column;
      background-image: linear-gradient(#efefef, #efefef);
      background-size: 22px 100%;
      background-repeat: no-repeat;
    }
    .drow { display: grid; grid-template-columns: 22px 100px 102px 1fr; }
    .drow.h { height: 20px; }
    .drow.h > div { background: #efefef; text-align: center; line-height: 19px; border-bottom: 1px solid #d5d5d5; color: #333; }
    .drow.h .corner { background: #fff; }
    .drow.h .hot { background: #7ab5f7; color: #fff; border: 1px solid #5da0ee; box-sizing: border-box; line-height: 18px; }
    .drow.b { height: 44px; }
    .drow.b > div { background: #fff; border-bottom: 1px solid #c9c9c9; box-sizing: border-box; }
    .drow.b .no { background: #7ab5f7; color: #fff; text-align: center; line-height: 43px; font-weight: 700; font-family: "DejaVu Sans", sans-serif; }
    .drow.b .code { padding-left: 3px; line-height: 43px; }
    .drow.b .info { background: #3a99ff; border: 2px solid #6fa8e8; }
    .drow.b .shape { display: flex; }
    .shape text { font: 13px "Liberation Mono", monospace; }
    .dfoot { display: flex; height: 26px; padding: 0 11px; gap: 6px; margin-bottom: 11px; flex: none; }
    .btn {
      width: 80px;
      box-sizing: border-box;
      border: 1px solid #c9ced6;
      border-radius: 3px;
      background: #f9f9f9;
      text-align: center;
      line-height: 24px;
      color: #333;
    }
    .btn.ok { background: #2e7fe0; border-color: #2e7fe0; color: #fff; margin-left: 54px; }

    .arrows { position: absolute; left: 0; top: 0; pointer-events: none; }
  `;

  private renderRibbon() {
    return html`<div class="ribbon">
      ${GROUPS.map((g) => html`
        <section class="group" style="width:${g.w}px">
          <div class="cols" style="padding-left:${g.pad}px">
            ${g.cols.map((c) => html`
              <div class="col" style="width:${c.w}px;margin-left:${c.ml ?? 0}px">
                ${c.big
                  ? html`<div class="big ${c.off ? 'off' : ''} ${c.active ? 'active' : ''}" style="width:${c.bw ?? c.w}px">
                      <div class="bi"><svg width="30" height="30" viewBox="0 0 30 30">${BIG[c.big]}</svg></div>
                      <div class="bt">${c.bigText}</div>
                      ${c.caret ? html`<span class="caret"></span>` : nothing}
                    </div>`
                  : c.items!.map((it) => html`
                      <div class="ri ${it.off ? 'off' : ''}">
                        <span class="slot">${ico(it.icon)}</span>
                        ${it.text ?? nothing}
                        ${it.caret ? html`<span class="caret"></span>` : nothing}
                      </div>`)}
              </div>`)}
          </div>
          <div class="glabel" style="padding-left:${g.labelShift ?? 0}px">${g.label}${g.caret ? html`<span class="caret"></span>` : nothing}</div>
        </section>`)}
    </div>`;
  }

  private renderFields() {
    const sels = ['首层', '梁', '圈梁', 'QL-1', '分层1'];
    return html`<div class="fields">
      ${sels.map((s, i) => html`<div class="sel ${i === 4 ? 'last' : ''}">${s}<span class="caret"></span></div>`)}
      <span class="check"></span><span class="lb">点加长度</span>
      ${FIELDS.map((f) => html`
        <span class="lb ${f.dim ? 'dim' : ''}" style="margin-left:${f.ml}px;width:${f.lw}px">${f.label}</span>
        <span class="input" style="width:${f.iw}px">${f.value}</span>`)}
      <div class="sel short">不偏移<span class="caret"></span></div>
      <span class="lb dim" style="margin-left:5px;width:18px">X=</span>
      <span class="spin">0<span class="updown"><i class="up"></i><i class="down"></i></span></span>
      <span class="lb dim" style="margin-left:1px;width:43px">mm Y=</span>
      <span class="spin">0<span class="updown"><i class="up"></i><i class="down"></i></span></span>
    </div>`;
  }

  private renderSide() {
    return html`<aside class="side">
      <div class="side-bar">
        <svg width="14" height="12" viewBox="0 0 14 12"><path d="M3.500 4v7M0 7.500h7M10.500 0v6M7.500 3h6" stroke="#3f7fd0" stroke-width="2"/></svg>
        <span class="side-btn first"><svg width="16" height="14" viewBox="0 0 16 14"><path d="M1 1h3v3H1zM1 6h3v3H1zM1 11h3v2H1zM6 2h9M6 7h9M6 12h9" fill="none" stroke="#4a90d9"/></svg></span>
        <span class="side-btn"><svg width="16" height="14" viewBox="0 0 16 14"><rect x=".5" y=".5" width="15" height="13" fill="#fff" stroke="#4a90d9"/><rect x="1" y="1" width="14" height="3" fill="#4a90d9"/><path d="M3 7h8M3 10h5" stroke="#4a90d9"/></svg></span>
      </div>
      <div class="tree">
        ${TREE.map(([icon, text, lvl]) => html`
          <div class="node ${lvl ? 'child' : ''} ${lvl === 2 ? 'sel-node' : ''}">${ico(icon)}<span>${text}</span></div>`)}
      </div>
    </aside>`;
  }

  private renderListPanel() {
    const tools: [string, string, boolean][] = [
      ['tnew', '新建', true], ['tdel', '删除', false], ['tcopy', '复制', false], ['tlayer', '层间复制', false], ['tsave', '存档', false],
    ];
    return html`<div class="panel list">
      <div class="phead">${closeX}</div>
      <div class="ptabs"><div class="ptab">构件列表</div><div class="ptab off">图纸管理</div></div>
      <div class="ptool">
        ${tools.map(([i, t, c]) => html`<div class="tb ${c ? 'with-caret' : ''}">${ico(i)}${t}${c ? html`<span class="caret"></span>` : nothing}</div>`)}
        <div class="more"><i class="tri-r"></i><i class="tri-r"></i></div>
      </div>
      <div class="search">搜索构件...
        <svg width="13" height="13" viewBox="0 0 13 13"><circle cx="5.500" cy="5.500" r="4" fill="none" stroke="#2a8fc9" stroke-width="1.500"/><path d="M8.500 8.500l3.500 3.500" stroke="#2a8fc9" stroke-width="1.500"/></svg>
      </div>
      <div class="ltree">
        <div class="ltree-row"><i class="tri"></i>圈梁</div>
        <div class="qlrow">QL-1</div>
      </div>
    </div>`;
  }

  private renderPropRow(p: [string, boolean, string, boolean], i: number) {
    const n = i + 1;
    const [name, blue, value, chk] = p;
    const isTree = n > 20;
    const gray = n === 15 || n === 16;
    return html`<div class="row">
      <div class="num ${n === 26 ? 'hot' : ''}">${n}</div>
      ${n === 20
        ? html`<div class="name branch"><span class="box"><i></i></span>${name}</div>`
        : isTree
          ? html`<div class="name branch ${blue ? 'blue' : ''}"><span class="stem"></span><span class="twig"></span>${name}</div>`
          : html`<div class="name ${blue ? 'blue' : ''}">${name}</div>`}
      ${n === 26
        ? html`<div class="val edit"><span class="dots"><i></i><i></i><i></i></span></div>`
        : html`<div class="val ${gray ? 'gray' : ''} ${n === 20 ? 'sect' : ''}">
            ${value === '2#12' ? html`2${rebarGlyph}12` : value}
          </div>`}
      <div class="chk">${chk ? html`<span class="check"></span>` : nothing}</div>
    </div>`;
  }

  private renderPropPanel() {
    return html`<div class="panel props">
      <div class="phead">${closeX}</div>
      <div class="ptabs"><div class="ptab">属性列表</div><div class="ptab off">图层管理</div></div>
      <div class="grid-wrap">
        <div class="grid">
          <div class="row head">
            <div class="corner"></div><div>属性名称</div><div class="hot">属性值</div><div class="attach">附加</div>
          </div>
          ${PROPS.map((p, i) => this.renderPropRow(p, i))}
        </div>
        <div class="sbar"><i class="up"></i><div class="thumb"></div></div>
      </div>
    </div>`;
  }

  private renderDialog() {
    return html`<div class="dialog">
      <div class="dhead">其它箍筋
        <svg width="10" height="10" viewBox="0 0 10 10"><path d="M1 1l8 8M9 1 1 9" stroke="#fff" stroke-width="1.500"/></svg>
      </div>
      <div class="dtable">
        <div class="drow h"><div class="corner"></div><div>箍筋图号</div><div class="hot">箍筋信息</div><div>图形</div></div>
        <div class="drow b">
          <div class="no">1</div>
          <div class="code">63</div>
          <div class="info"></div>
          <div class="shape">
            <svg width="252" height="43" viewBox="0 0 252 43">
              <text x="22" y="24" fill="#e00">H</text>
              <text x="140" y="20" fill="#111">L</text>
              <path d="M39 9V32H245V9" fill="none" stroke="#111" stroke-width="2"/>
            </svg>
          </div>
        </div>
      </div>
      <div class="dfoot">
        <div class="btn">新建</div><div class="btn">删除</div><div class="btn">复制</div>
        <div class="btn ok">确定</div><div class="btn">取消</div>
      </div>
    </div>`;
  }

  override render() {
    return html`
      <div class="top">
        <div class="logo"><div class="logo-box">T</div><span class="logo-mark"></span></div>
        <div class="top-right">
          <div class="qat-row">
            <div class="qat">
              ${QAT.map(([q, c]) => html`<span class="qat-slot ${c ? 'wide' : ''}">${ico(q)}${c ? html`<span class="caret"></span>` : nothing}</span>`)}
              <span class="qat-more"><span class="caret"></span></span>
            </div>
            <div class="title">广联达BIM土建计量平台 GTJ2018 - [F:\\测试.GTJ]</div>
          </div>
          <div class="tabs">
            ${['开始', '工程设置', '建模', '视图', '工具', '工程量', '云应用'].map((t) => html`<div class="tab ${t === '建模' ? 'on' : ''}">${t}</div>`)}
          </div>
        </div>
      </div>
      ${this.renderRibbon()}
      ${this.renderFields()}
      <div class="main">
        ${this.renderSide()}
        <div class="mid">
          ${this.renderListPanel()}
          ${this.renderPropPanel()}
        </div>
        <div class="grip"><div><i></i></div></div>
        <div class="canvas">
          <svg width="713" height="775" viewBox="527 168 713 775">${drawing()}</svg>
        </div>
      </div>
      ${this.renderDialog()}
      <svg class="arrows" width="1240" height="943" viewBox="0 0 1240 943">
        ${ARROWS.map((a) => svg`<polygon points=${arrowPoints(a)} fill="#f01df0"/>`)}
      </svg>
    `;
  }
}
